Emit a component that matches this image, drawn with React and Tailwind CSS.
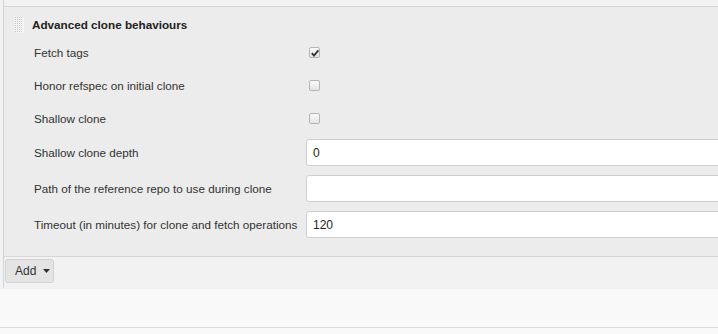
import React from "react";

function Check({ checked }) {
  return (
    <span className="relative inline-block w-[11px] h-[11px] rounded-[2px] border border-[#b5b5b5] bg-gradient-to-b from-[#fafafa] to-[#e4e4e4]">
      {checked && (
        <svg className="absolute left-[1px] top-[1px]" width="8" height="8" viewBox="0 0 8 8">
          <path d="M0.8 4.2 L3 6.6 L7.4 1.2" fill="none" stroke="#333" strokeWidth="1.8" />
        </svg>
      )}
    </span>
  );
}

function DragHandle() {
  const dots = [];
  for (let r = 0; r < 8; r++) {
    for (let c = 0; c < 4; c++) {
      dots.push(<rect key={r + "-" + c} x={c * 2} y={r * 2} width="1" height="1" fill="#c8c8c8" />);
    }
  }
  return (
    <svg width="9" height="16" viewBox="0 0 9 16" className="bg-[#f4f4f4]">
      {dots}
    </svg>
  );
}

function CheckRow({ label, checked }) {
  return (
    <div className="flex items-center h-[33px]">
      <div className="w-[305px] shrink-0 pl-[30px]">{label}</div>
      <Check checked={checked} />
    </div>
  );
}

function InputRow({ label, value }) {
  return (
    <div className="flex items-center h-[27px]">
      <div className="w-[302px] pl-[30px] shrink-0 whitespace-nowrap">{label}</div>
      <div className="w-[440px] shrink-0 h-[27px] bg-white border border-[#cfcfcf] rounded-[3px] pl-[6px] flex items-center text-[12px] text-[#222]">
        {value}
      </div>
    </div>
  );
}

export default function App() {
  return (
    <div className="w-[718px] h-[334px] overflow-hidden bg-[#f9f9f9] font-['Liberation_Sans',Arial,sans-serif] text-[11.7px] text-[#333]">
      <div className="h-[289px] bg-[#f2f2f2] pl-[3px]">
        <div className="h-[288px] border-l border-[#d4d4d4] pt-[6px]">
          <div className="bg-[#ececec] border-t border-b border-[#d6d6d6] h-[251px]">
            <div className="flex items-center h-[29px] pl-[11px] pt-[6px]">
              <DragHandle />
              <span className="ml-[8px] font-bold text-[#222]">Advanced clone behaviours</span>
            </div>
            <CheckRow label="Fetch tags" checked />
            <CheckRow label="Honor refspec on initial clone" />
            <CheckRow label="Shallow clone" />
            <div className="flex flex-col gap-[9px] pt-[4px]">
              <InputRow label="Shallow clone depth" value="0" />
              <InputRow label="Path of the reference repo to use during clone" value="" />
              <InputRow label="Timeout (in minutes) for clone and fetch operations" value="120" />
            </div>
          </div>
          <div className="pt-[2px] pl-[1px]">
            <button className="h-[24px] w-[49px] flex items-center pl-[9px] bg-[#e4e4e4] border border-[#d2d2d2] rounded-[3px] text-[#333] text-[12px]">
              <span>Add</span>
              <svg className="ml-[7px]" width="7" height="4" viewBox="0 0 7 4">
                <path d="M0 0 L7 0 L3.5 4 Z" fill="#333" />
              </svg>
            </button>
          </div>
        </div>
      </div>
      <div className="h-[38px]" />
      <div className="border-t border-[#dcdcdc]" />
    </div>
  );
}
